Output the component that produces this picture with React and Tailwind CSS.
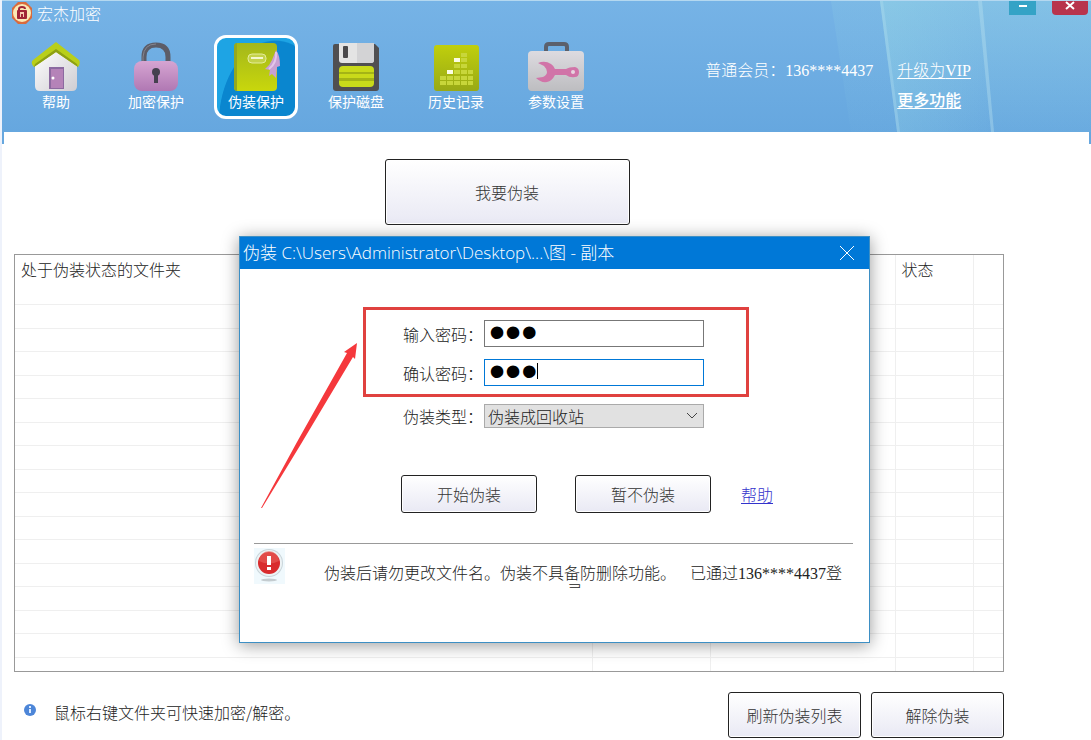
import { useState } from "react";

const hanFont = "font-['Noto_Sans_CJK_SC',sans-serif]";
const buttonStyle =
  "rounded-[3px] border border-[#222] bg-linear-to-b from-white to-[#e9e9f4] text-base leading-6 text-[#333] shadow-[inset_0_0_0_1px_#fff]";

function AppLogo() {
  return (
    <svg viewBox="0 0 24 24" className="size-6">
      <path d="M8 1h8l6 6v10l-6 6H8l-6-6V7z" fill="#d96a3c" />
      <circle cx="12" cy="12" r="9" fill="#fbe9b4" />
      <path d="M9 10V8q0-2 3-2t3 2" fill="none" stroke="#a02437" strokeWidth="2" />
      <rect x="7" y="9" width="10" height="9" rx="1" fill="#a02437" />
      <path d="M10 11h4v5h-4z" fill="#f6c9b0" />
      <path d="M11 13h2v3h-2z" fill="#a02437" />
    </svg>
  );
}

function HouseIcon() {
  return (
    <svg viewBox="0 0 50 50" className="size-[50px]">
      <defs>
        <linearGradient id="wall" x1="0" y1="0" x2="1" y2="1">
          <stop offset="0" stopColor="#ffffff" />
          <stop offset="1" stopColor="#cfcdd2" />
        </linearGradient>
      </defs>
      <path d="M4 22 25 7l21 15v22q0 5-5 5H9q-5 0-5-5z" fill="url(#wall)" />
      <path d="M25 0 48 18q2 3-1 7L25 10 3 25q-4-4-1-7z" fill="#b9cf19" />
      <path d="M3 25 25 10l22 15-1-3L25 7 4 22z" fill="#8ea014" />
      <path d="M18 25h15v22H18z" fill="#8c6aa0" />
      <path d="M20 27h12v19H20z" fill="#b583b8" />
      <circle cx="22" cy="36" r="1.500" fill="#fff" />
    </svg>
  );
}

function LockIcon() {
  return (
    <svg viewBox="0 0 50 50" className="size-[50px]">
      <defs>
        <linearGradient id="lock" x1="0" y1="0" x2="0" y2="1">
          <stop offset="0" stopColor="#d6a5d2" />
          <stop offset="1" stopColor="#b078b3" />
        </linearGradient>
      </defs>
      <path d="M13 24V15q0-12 12-12t12 12v9" fill="none" stroke="#5c5d68" strokeWidth="5" />
      <path d="M12 19v-4Q13 2 25 2" fill="none" stroke="#85858f" strokeWidth="1" />
      <rect x="3" y="19" width="44" height="30" rx="8" fill="url(#lock)" />
      <circle cx="25" cy="30" r="4" fill="#45404f" />
      <path d="M23 32h4v9h-4z" fill="#45404f" />
    </svg>
  );
}

function BookIcon() {
  return (
    <svg viewBox="0 0 50 50" className="size-[50px]">
      <defs>
        <linearGradient id="book" x1="0" y1="0" x2="0" y2="1">
          <stop offset="0" stopColor="#a3b71a" />
          <stop offset="1" stopColor="#c9d70c" />
        </linearGradient>
      </defs>
      <rect x="3" y="1" width="43" height="48" rx="4" fill="url(#book)" />
      <path d="M3 5q0-4 3-4v48q-3 0-3-4z" fill="#95a81e" />
      <rect x="17" y="12" width="18" height="9" rx="4" fill="#c4d24a" stroke="#e4ec9a" strokeWidth="1" />
      <path d="M20 16h12" stroke="#f4f7cf" strokeWidth="2" />
      <path d="M45 8q4 5 4 16l-3 1-1 11-4-4-3 2 1-6-5-1q5-4 7-9z" fill="#c9a0d3" />
      <path d="M45 10q1 11-7 17" fill="none" stroke="#e3c6ea" strokeWidth="2" />
    </svg>
  );
}

function DiskIcon() {
  return (
    <svg viewBox="0 0 50 50" className="size-[50px]">
      <path d="M4 2h40l4 4v40q0 3-3 3H5q-3 0-3-3V4q0-2 2-2z" fill="#504f51" />
      <path d="M8 1h35v17q0 3-3 3H11q-3 0-3-3z" fill="#e4e4e4" />
      <path d="M26 1h17v17q0 3-3 3H26z" fill="#d3d3d5" />
      <rect x="12" y="4" width="5" height="12" rx="1" fill="#4a494b" />
      <rect x="8" y="24" width="35" height="21" rx="4" fill="#c9da1a" />
      <path d="M8 30h35v2H8zM8 36h35v3H8z" fill="#a4b416" />
    </svg>
  );
}

function HistoryIcon() {
  return (
    <svg viewBox="0 0 50 50" className="size-[50px]">
      <defs>
        <linearGradient id="history" x1="0" y1="0" x2="0" y2="1">
          <stop offset="0" stopColor="#c0cf0c" />
          <stop offset="1" stopColor="#98a916" />
        </linearGradient>
      </defs>
      <rect x="3" y="3" width="45" height="46" rx="3" fill="url(#history)" />
      <path
        d="M9 34h6v4H9zM9 39h6v4H9zM16 34h6v4h-6zM16 39h6v4h-6zM23 22h6v4h-6zM23 28h6v4h-6zM23 34h6v4h-6zM23 39h6v4h-6zM30 11h6v4h-6zM30 16h6v4h-6zM30 22h6v4h-6zM30 28h6v4h-6zM30 34h6v4h-6zM30 39h6v4h-6zM37 28h5v4h-5zM37 34h5v4h-5zM37 39h5v4h-5z"
        fill="#c8d63a"
      />
      <path d="M16 28h6v4h-6zM23 16h6v4h-6z" fill="#fbfce4" />
    </svg>
  );
}

function ToolboxIcon() {
  return (
    <svg viewBox="0 0 58 50" className="h-[50px] w-[58px]">
      <defs>
        <linearGradient id="toolbox" x1="0" y1="0" x2="0" y2="1">
          <stop offset="0" stopColor="#dddbe0" />
          <stop offset="1" stopColor="#bdbdc0" />
        </linearGradient>
      </defs>
      <path d="M19 10V5q0-3 3-3h15q3 0 3 3v5" fill="none" stroke="#5b606c" strokeWidth="4" />
      <rect x="1" y="9" width="56" height="40" rx="4" fill="url(#toolbox)" />
      <path
        d="M11 21q7-3 13 1 3 2 4 5h11q3-2 9-2 4 1 4 5 0 5-4 5-5 1-9-2H28q-3 6-8 7-6 1-11-4l7-1q4-2 4-5t-3-6z"
        fill="#d174a8"
      />
      <circle cx="46" cy="30" r="2" fill="#e8d4e0" />
    </svg>
  );
}

const navItems = [
  { label: "帮助", icon: <HouseIcon /> },
  { label: "加密保护", icon: <LockIcon /> },
  { label: "伪装保护", icon: <BookIcon />, active: true },
  { label: "保护磁盘", icon: <DiskIcon /> },
  { label: "历史记录", icon: <HistoryIcon /> },
  { label: "参数设置", icon: <ToolboxIcon /> },
];

function Header() {
  return (
    <header className="relative flex h-[132px] flex-col border-t border-[#b4d8f0] bg-linear-to-b from-[#76b3e6] to-[#66a7df] text-white">
      <svg
        className="absolute top-0 right-0 h-full w-[260px]"
        viewBox="0 0 260 131"
        preserveAspectRatio="none"
      >
        <defs>
          <linearGradient id="ray" x1="0" y1="0" x2="0" y2="1">
            <stop offset="0" stopColor="#9bdbe6" stopOpacity="0.5" />
            <stop offset="1" stopColor="#9bdbe6" stopOpacity="0.1" />
          </linearGradient>
          <linearGradient id="rayRight" x1="0" y1="0" x2="1" y2="0">
            <stop offset="0" stopColor="#9bdbe6" stopOpacity="0.5" />
            <stop offset="1" stopColor="#9bdbe6" stopOpacity="0" />
          </linearGradient>
        </defs>
        <path d="M0 0h50l15 131H20z" fill="url(#ray)" opacity="0.300" />
        <path d="M49 0h211v131H66z" fill="url(#ray)" opacity="0.700" />
        <path d="M49 0h98l14 131H66z" fill="url(#rayRight)" opacity="0.500" />
        <path d="M49 0h3l17 131h-3z" fill="#b9e2f2" opacity="0.300" />
        <path d="M147 0h4l12 131h-3z" fill="#c3e8f2" opacity="0.350" />
      </svg>

      <div className="relative flex h-6 items-start justify-between pl-2">
        <div className="flex items-center">
          <AppLogo />
          <h1 className="pl-[3px] text-base leading-6 font-light">宏杰加密</h1>
        </div>
        <div className="flex gap-4 pr-[3px]">
          <button aria-label="最小化" className="flex h-3.5 w-[27px] justify-center bg-[#35a3c6]">
            <svg viewBox="0 0 10 10" className="size-2.5" stroke="#fff" strokeWidth="2">
              <path d="M1 5h8" />
            </svg>
          </button>
          <button aria-label="关闭" className="flex h-3.5 w-9 justify-center rounded-b-sm bg-[#b8344c]">
            <svg viewBox="0 0 10 10" className="size-2.5" stroke="#fff" strokeWidth="2">
              <path d="m1 1 8 7M9 1 1 8" />
            </svg>
          </button>
        </div>
      </div>

      <div className="relative flex justify-between pt-2.5 pl-3">
        <nav className="flex gap-4">
          {navItems.map((item) => (
            <button
              key={item.label}
              className={
                item.active
                  ? "flex h-[84px] w-[84px] flex-col items-center rounded-xl border-3 border-white bg-[radial-gradient(ellipse_at_75%_110%,#0a86cf_68%,#1ea4e4_69%)] pt-1"
                  : "flex h-[84px] w-[84px] flex-col items-center pt-[7px]"
              }
            >
              {item.icon}
              <span className="text-sm leading-[18px]">{item.label}</span>
            </button>
          ))}
        </nav>
        <div className="flex gap-6 pt-[22px] pr-[120px] text-base leading-6 font-light">
          <p>
            普通会员：
            <span className="font-['Liberation_Serif',serif] font-normal">136****4437</span>
          </p>
          <div className="flex flex-col gap-1">
            <a href="#vip" className="underline underline-offset-2">
              升级为<span className="font-['Liberation_Serif',serif] font-normal">VIP</span>
            </a>
            <a href="#more" className="font-medium underline underline-offset-2">
              更多功能
            </a>
          </div>
        </div>
      </div>
    </header>
  );
}

const rows = Array.from({ length: 16 }, (_, i) => i);

function FolderTable() {
  return (
    <div className="h-[418px] overflow-hidden border border-[#999]">
      <table className="w-full table-fixed border-collapse text-left text-base text-[#222]">
        <colgroup>
          <col />
          <col className="w-[118px]" />
          <col className="w-[185px]" />
          <col className="w-[78px]" />
          <col className="w-[30px]" />
        </colgroup>
        <thead>
          <tr className="h-[49px] align-top">
            <th className="border-r border-[#efefef] px-1.5 pt-0.5 leading-6 font-light">处于伪装状态的文件夹</th>
            <th className="border-r border-[#efefef]" />
            <th className="border-r border-[#efefef]" />
            <th className="border-r border-[#efefef] px-1.5 pt-0.5 leading-6 font-light">状态</th>
            <th />
          </tr>
        </thead>
        <tbody>
          {rows.map((row) => (
            <tr key={row} className="h-6 border-t border-[#efefef] even:h-[23px]">
              <td className="border-r border-[#efefef]" />
              <td className="border-r border-[#efefef]" />
              <td className="border-r border-[#efefef]" />
              <td className="border-r border-[#efefef]" />
              <td />
            </tr>
          ))}
        </tbody>
      </table>
    </div>
  );
}

function DisguiseDialog() {
  const [password, setPassword] = useState("123");
  const [confirm, setConfirm] = useState("123");
  const passwordStyle =
    "h-[27px] w-[220px] border bg-white px-1 pb-1 font-['Liberation_Sans',sans-serif] text-[46px] leading-none text-black outline-none";

  return (
    <section
      role="dialog"
      aria-labelledby="dialog-title"
      className="absolute top-[236px] left-[239px] h-[407px] w-[631px] border border-[#3d8fc4] bg-white text-base leading-6 font-light text-[#222] shadow-[0_2px_16px_rgba(0,0,0,0.4)]"
    >
      <div className="flex h-8 items-center justify-between bg-[#0078d7] pr-3.5 pl-[3px] text-white">
        <h2
          id="dialog-title"
          className="font-['Open_Sans','Noto_Sans_CJK_SC',sans-serif] text-[17px] font-light"
        >
          伪装 C:\Users\Administrator\Desktop\...\图 - 副本
        </h2>
        <button aria-label="关闭">
          <svg viewBox="0 0 16 16" className="size-4" stroke="#fff">
            <path d="m1 1 14 14M15 1 1 15" />
          </svg>
        </button>
      </div>

      <form onSubmit={(e) => e.preventDefault()}>
        <div className="mt-[38px] ml-[123px] flex h-[90px] w-[386px] flex-col gap-3 border-3 border-[#e0413f] pt-2.5 pl-[37px]">
          <div className="flex items-center">
            <label htmlFor="password" className="w-[81px]">输入密码：</label>
            <input
              id="password"
              type="password"
              className={`${passwordStyle} border-[#777]`}
              value={password}
              onChange={(e) => setPassword(e.target.value)}
            />
          </div>
          <div className="relative flex items-center">
            <label htmlFor="confirm" className="w-[81px]">确认密码：</label>
            <input
              id="confirm"
              type="password"
              className={`${passwordStyle} border-[#0078d7]`}
              value={confirm}
              onChange={(e) => setConfirm(e.target.value)}
            />
            <span className="absolute top-1 left-[134px] h-4 w-px bg-black" />
          </div>
        </div>

        <div className="mt-[7px] ml-[163px] flex items-center">
          <label htmlFor="kind" className="w-[81px]">伪装类型：</label>
          <div className="relative">
            <select
              id="kind"
              className="block h-6 w-[220px] appearance-none border border-[#aaa] bg-[#e1e1e1] px-[3px] leading-5"
            >
              <option>伪装成回收站</option>
            </select>
            <svg
              viewBox="0 0 12 12"
              className="pointer-events-none absolute top-1.5 right-1.5 size-3"
              fill="none"
              stroke="#444"
            >
              <path d="m1 3 5 5 5-5" />
            </svg>
          </div>
        </div>

        <div className="mt-[47px] ml-[161px] flex items-center">
          <button className={`${buttonStyle} h-[38px] w-[136px]`}>开始伪装</button>
          <button type="button" className={`${buttonStyle} ml-[38px] h-[38px] w-[136px]`}>
            暂不伪装
          </button>
          <a href="#help" className="ml-[30px] text-[#3333cc] underline underline-offset-2">
            帮助
          </a>
        </div>
      </form>

      <div className="mr-4 ml-3.5 mt-[30px] flex border-t border-[#999] pt-1">
        <svg viewBox="0 0 32 38" className="h-[38px] w-8">
          <path d="M0 0h31v36H0z" fill="#f0f9fd" />
          <ellipse cx="15" cy="32" rx="8" ry="1.500" fill="#c4ccd0" />
          <circle cx="15" cy="15" r="14" fill="#c9d5da" />
          <circle cx="15" cy="15" r="13" fill="#edf3f5" />
          <circle cx="15" cy="15" r="11" fill="#d92b2d" />
          <path d="M5 13a10 10 0 0 1 20 0q-10 5-20 0z" fill="#e8605c" opacity="0.600" />
          <path d="M13 8h4v9h-4zM13 19h4v3h-4z" fill="#fff" />
        </svg>
        <p className="mt-3 ml-9 h-7 w-[522px] overflow-hidden text-center leading-6 whitespace-nowrap">
          伪装后请勿更改文件名。伪装不具备防删除功能。&nbsp;&nbsp;&nbsp;&nbsp;已通过
          <span className="font-['Liberation_Serif',serif] font-normal">136****4437</span>登
          <span className="block pr-4 leading-2">录</span>
        </p>
      </div>

      <svg viewBox="0 0 100 168" className="pointer-events-none absolute top-[105px] left-5 h-[168px] w-[100px]">
        <path d="M1 166 37 100 87 11l-3-1L97 1l-2 16-2-2L41 102 2 166z" fill="#f5383c" />
      </svg>
    </section>
  );
}

export default function App() {
  return (
    <div className={`${hanFont} relative min-h-screen bg-[#eef2fb] pl-0.5`}>
      <Header />
      <main className="min-h-[608px] bg-white">
        <div className="h-3 border-x-2 border-[#66a7df]" />
        <div className="pr-[87px] pl-3">
          <div className="flex justify-center pt-[15px] pr-1">
            <button className={`${buttonStyle} h-[66px] w-[245px] font-light`}>我要伪装</button>
          </div>
          <div className="pt-[29px]">
            <FolderTable />
          </div>
          <div className="flex items-start justify-between pt-5">
            <p className="flex items-start gap-[18px] pt-2 pl-2.5 text-base leading-6 font-light text-[#222]">
              <svg viewBox="0 0 12 12" className="mt-1 size-3">
                <circle cx="6" cy="6" r="6" fill="#4d86d8" />
                <path d="M5 5h2v4H5zM5 2h2v2H5z" fill="#dcebff" />
              </svg>
              鼠标右键文件夹可快速加密/解密。
            </p>
            <div className="flex gap-2.5">
              <button className={`${buttonStyle} h-[46px] w-[133px] font-light`}>刷新伪装列表</button>
              <button className={`${buttonStyle} h-[46px] w-[133px] font-light`}>解除伪装</button>
            </div>
          </div>
        </div>
      </main>
      <DisguiseDialog />
    </div>
  );
}
